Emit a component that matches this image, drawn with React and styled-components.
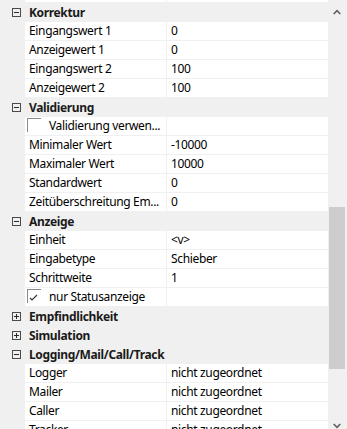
import React from 'react';
import styled, { createGlobalStyle } from 'styled-components';

const Global = createGlobalStyle`
  html, body { margin: 0; padding: 0; background: #ffffff; }
  body { font-family: "Segoe UI", "Noto Sans", sans-serif; }
`;

const Frame = styled.div`
  width: 347px;
  height: 429px;
  display: flex;
  overflow: hidden;
  background: #f0f0f0;
`;

const Viewport = styled.div`
  flex: 1;
  overflow: hidden;
  padding-right: 1px;
  background: #f0f0f0;
`;

const List = styled.div`
  display: flex;
  flex-direction: column;
  margin-top: ${(p) => -p.$offset}px;
`;

const CategoryRow = styled.div`
  height: 19px;
  display: flex;
  align-items: center;
  padding-left: 12px;
  gap: 8px;
  font-size: 12px;
  line-height: 18px;
  font-weight: 700;
  color: #1a1a1a;
  letter-spacing: -0.35px;
`;

const Row = styled.div`
  height: 19px;
  box-sizing: border-box;
  margin-left: 25px;
  padding-bottom: 1px;
  display: grid;
  grid-template-columns: 141px 1fr;
  column-gap: 1px;
  background: #f0f0f0;
`;

const Cell = styled.div`
  background: #ffffff;
  font-size: 12px;
  line-height: 18px;
  color: #000000;
  padding-left: ${(p) => (p.$check ? 2 : 4)}px;
  white-space: nowrap;
  overflow: hidden;
  letter-spacing: -0.35px;
  display: flex;
  align-items: flex-start;
  gap: 8px;
`;

const CheckBox = styled.span`
  width: 14px;
  height: 14px;
  margin-top: 1px;
  box-sizing: border-box;
  border-top: 1px solid #8a8a8a;
  border-left: 1px solid #8a8a8a;
  flex: none;
  display: block;
`;

const Scrollbar = styled.div`
  width: 18px;
  display: flex;
  flex-direction: column;
  background: #f0f0f0;
`;

const ArrowButton = styled.div`
  height: 20px;
  display: flex;
  justify-content: center;
  padding-right: 3px;
  padding-top: ${(p) => p.$top}px;
  box-sizing: border-box;
`;

const Track = styled.div`
  flex: 1;
`;

const Thumb = styled.div`
  margin-top: ${(p) => p.$top}px;
  width: 16px;
  height: ${(p) => p.$height}px;
  background: #cdcdcd;
`;

const ExpandBox = ({ open }) => (
  <svg width="9" height="9" viewBox="0 0 9 9" style={{ flex: 'none' }}>
    <rect x="0.5" y="0.5" width="8" height="8" fill="none" stroke="#4a4a4a" />
    <line x1="2" y1="4.5" x2="7" y2="4.5" stroke="#2a2a2a" />
    {!open && <line x1="4.5" y1="2" x2="4.5" y2="7" stroke="#2a2a2a" />}
  </svg>
);

const Check = ({ checked }) => (
  <CheckBox>
    {checked && (
      <svg width="13" height="13" viewBox="0 0 13 13" style={{ display: 'block' }}>
        <polyline points="2,8 4,10 9,5" fill="none" stroke="#333" strokeWidth="1.1" />
      </svg>
    )}
  </CheckBox>
);

const Chevron = ({ up }) => (
  <svg width="8" height="6" viewBox="0 0 8 6">
    <polyline
      points={up ? '0.7,5 4,1.6 7.3,5' : '0.7,1 4,4.4 7.3,1'}
      fill="none"
      stroke="#606060"
      strokeWidth="1.6"
    />
  </svg>
);

const sections = [
  {
    title: 'Korrektur',
    open: true,
    rows: [
      { name: 'Eingangswert 1', value: '0' },
      { name: 'Anzeigewert 1', value: '0' },
      { name: 'Eingangswert 2', value: '100' },
      { name: 'Anzeigewert 2', value: '100' },
    ],
  },
  {
    title: 'Validierung',
    open: true,
    rows: [
      { check: false, name: 'Validierung verwen...' },
      { name: 'Minimaler Wert', value: '-10000' },
      { name: 'Maximaler Wert', value: '10000' },
      { name: 'Standardwert', value: '0' },
      { name: 'Zeitüberschreitung Em...', value: '0' },
    ],
  },
  {
    title: 'Anzeige',
    open: true,
    rows: [
      { name: 'Einheit', value: '<v>' },
      { name: 'Eingabetype', value: 'Schieber' },
      { name: 'Schrittweite', value: '1' },
      { check: true, name: 'nur Statusanzeige' },
    ],
  },
  { title: 'Empfindlichkeit', open: false, rows: [] },
  { title: 'Simulation', open: false, rows: [] },
  {
    title: 'Logging/Mail/Call/Track',
    open: true,
    rows: [
      { name: 'Logger', value: 'nicht zugeordnet' },
      { name: 'Mailer', value: 'nicht zugeordnet' },
      { name: 'Caller', value: 'nicht zugeordnet' },
      { name: 'Tracker', value: 'nicht zugeordnet' },
    ],
  },
];

export default function App() {
  return (
    <>
      <Global />
      <Frame>
        <Viewport>
          <List $offset={16}>
            <Row>
              <Cell />
              <Cell />
            </Row>
            {sections.map((s) => (
              <React.Fragment key={s.title}>
                <CategoryRow>
                  <ExpandBox open={s.open} />
                  <span>{s.title}</span>
                </CategoryRow>
                {s.rows.map((r) => (
                  <Row key={r.name}>
                    {r.check !== undefined ? (
                      <Cell $check>
                        <Check checked={r.check} />
                        <span>{r.name}</span>
                      </Cell>
                    ) : (
                      <Cell>{r.name}</Cell>
                    )}
                    <Cell>{r.value}</Cell>
                  </Row>
                ))}
              </React.Fragment>
            ))}
          </List>
        </Viewport>
        <Scrollbar>
          <ArrowButton $top={9}>
            <Chevron up />
          </ArrowButton>
          <Track>
            <Thumb $top={187} $height={162} />
          </Track>
          <ArrowButton $top={14}>
            <Chevron />
          </ArrowButton>
        </Scrollbar>
      </Frame>
    </>
  );
}
